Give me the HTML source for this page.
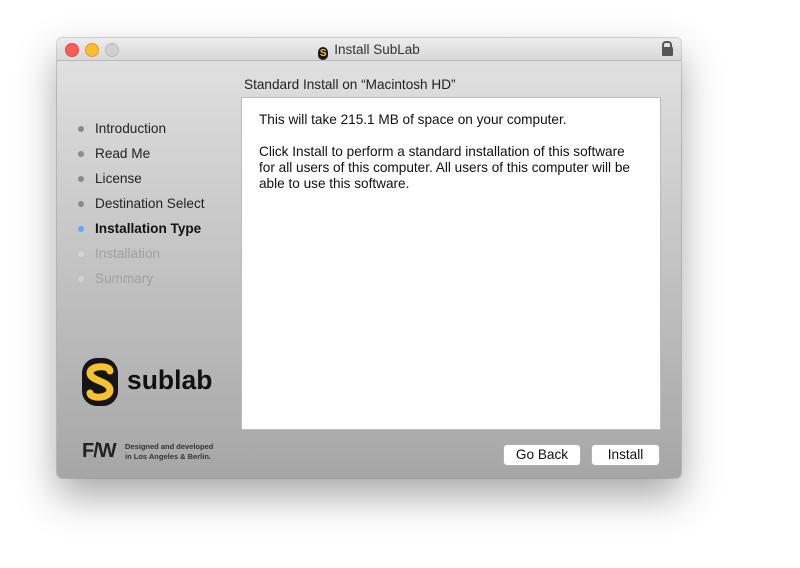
<!DOCTYPE html>
<html><head><style>
body{margin:0;width:800px;height:568px;background:#fff;font-family:"Liberation Sans",sans-serif;position:relative;overflow:hidden}
.win{position:absolute;left:57px;top:38px;width:624px;height:440px;border-radius:5px;overflow:hidden;background:linear-gradient(#e4e4e4,#d6d6d6 20%,#b8b8b8 70%,#a6a6a6);box-shadow:0 18px 40px rgba(0,0,0,.35),0 0 0 1px rgba(0,0,0,.15)}
.tb{position:absolute;left:0;top:0;width:624px;height:22px;background:linear-gradient(#ececec,#d8d8d8);border-bottom:1px solid #b8b8b8;text-align:center;font-size:13.5px;line-height:23px;color:#333}
.dot{position:absolute;top:5px;width:12px;height:12px;border-radius:50%}
.a{position:absolute;white-space:nowrap}
.s{font-size:13.6px;color:#222}
.b{position:absolute;width:6px;height:6px;border-radius:50%;background:#8a8a8a}
.btn{position:absolute;top:406px;height:20px;background:#fff;border:1px solid #b0b0b0;border-radius:4px;font-size:13.6px;line-height:20px;text-align:center;color:#111}
</style></head><body>
<div class="win">
 <div class="tb">
  <div class="dot" style="left:8px;background:#fc5f57;border:0.5px solid #df4744"></div>
  <div class="dot" style="left:28px;background:#fdbc2e;border:0.5px solid #de9f25"></div>
  <div class="dot" style="left:48px;background:#d0d0d0;border:0.5px solid #bbb"></div>
  <span style="display:inline-block;width:10px;height:13px;border-radius:5px;background:#1a1a1a;vertical-align:-2px;margin-right:6px;color:#f7c42d;font-size:10px;line-height:13px;font-weight:bold">S</span>Install SubLab
  <div style="position:absolute;right:8px;top:9px;width:11px;height:9px;background:#555;border-radius:1px"></div>
  <div style="position:absolute;right:9px;top:3px;width:6px;height:7px;border:2px solid #555;border-bottom:0;border-radius:4px 4px 0 0"></div>
 </div>
 <div class="a s" style="left:187px;top:39px">Standard Install on “Macintosh HD”</div>
 <div style="position:absolute;left:184px;top:59px;width:418px;height:331px;background:#fff;border:1px solid #bcbcbc"></div>
 <div class="a s" style="left:202px;top:74px;color:#111">This will take 215.1 MB of space on your computer.</div>
 <div class="a s" style="left:202px;top:106px;line-height:16px;color:#111">Click Install to perform a standard installation of this software<br>for all users of this computer. All users of this computer will be<br>able to use this software.</div>

 <div class="b" style="left:21px;top:88px"></div><div class="a s" style="left:38px;top:83px">Introduction</div>
 <div class="b" style="left:21px;top:113px"></div><div class="a s" style="left:38px;top:108px">Read Me</div>
 <div class="b" style="left:21px;top:138px"></div><div class="a s" style="left:38px;top:133px">License</div>
 <div class="b" style="left:21px;top:163px"></div><div class="a s" style="left:38px;top:158px">Destination Select</div>
 <div class="b" style="left:21px;top:188px;background:#5ea9f3"></div><div class="a s" style="left:38px;top:183px;font-weight:bold;color:#111">Installation Type</div>
 <div class="b" style="left:21px;top:213px;background:#d4d4d4"></div><div class="a s" style="left:38px;top:208px;color:#a0a0a0">Installation</div>
 <div class="b" style="left:21px;top:238px;background:#d0d0d0"></div><div class="a s" style="left:38px;top:233px;color:#a0a0a0">Summary</div>

 <svg class="a" style="left:24px;top:319px" width="40" height="50" viewBox="0 0 40 50">
  <rect x="1" y="1" width="36" height="48" rx="15" fill="#151515"/>
  <path d="M29 14 C29 8 9 8 9 16 C9 24 29 24 29 33 C29 42 9 42 9 36" fill="none" stroke="#f7c22d" stroke-width="7" stroke-linecap="round"/>
 </svg>
 <div class="a" style="left:70px;top:327px;font-size:26.5px;font-weight:bold;color:#111">sublab</div>
 <div class="a" style="left:25px;top:402px;font-size:20px;font-weight:bold;color:#222;letter-spacing:-1px">F/W</div>
 <div class="a" style="left:68px;top:404px;font-size:7.5px;font-weight:bold;color:#333;line-height:10px">Designed and developed<br>in Los Angeles &amp; Berlin.</div>

 <div class="btn" style="left:446px;width:76px">Go Back</div>
 <div class="btn" style="left:534px;width:67px">Install</div>
</div>
</body></html>
